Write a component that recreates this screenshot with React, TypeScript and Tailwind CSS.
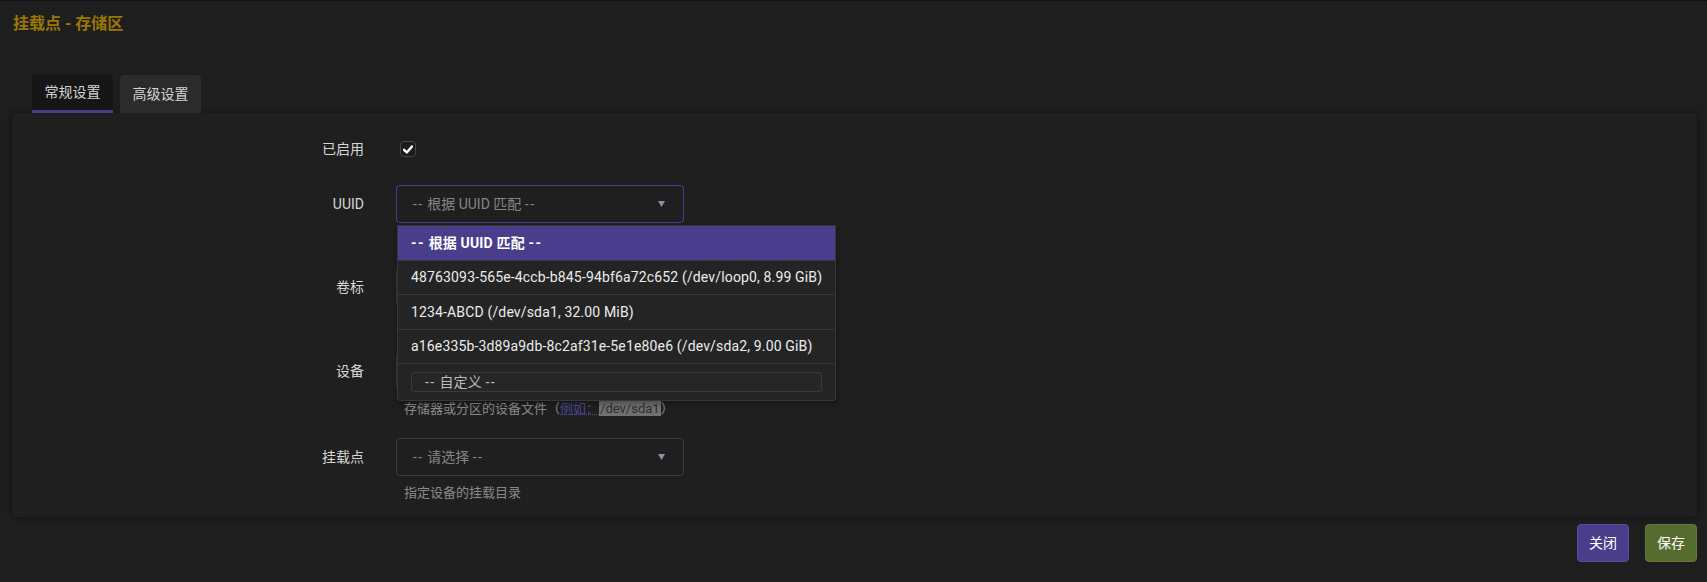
import React from 'react';

// "--" rendered with visible gap between hyphens, as in the original font
const Dashes = () => <span className="tracking-[1.5px]">--</span>;

const withDashes = (inner: string) => (
  <>
    <Dashes /> {inner} <Dashes />
  </>
);

const options = [
  { key: 'uuid', text: withDashes('根据 UUID 匹配'), active: true, h: 'h-[35px]' },
  { key: 'loop0', text: '48763093-565e-4ccb-b845-94bf6a72c652 (/dev/loop0, 8.99 GiB)', active: false, h: 'h-[34px]' },
  { key: 'sda1', text: '1234-ABCD (/dev/sda1, 32.00 MiB)', active: false, h: 'h-[35px]' },
  { key: 'sda2', text: 'a16e335b-3d89a9db-8c2af31e-5e1e80e6 (/dev/sda2, 9.00 GiB)', active: false, h: 'h-[34px]' },
];

const Arrow = () => (
  <svg width="7" height="6" viewBox="0 0 7 6" className="shrink-0">
    <polygon points="0,0 7,0 3.5,6" fill="#8494a8" />
  </svg>
);

const Label = ({ children }: { children: React.ReactNode }) => (
  <div className="w-[352px] shrink-0 h-[38px] flex items-center justify-end text-[14px] text-[#d6d6d6]">
    {children}
  </div>
);

const FakeSelect = ({ text, focused }: { text: React.ReactNode; focused?: boolean }) => (
  <div
    className={`w-[288px] h-[38px] rounded-[4px] border flex items-center justify-between pl-[16px] pr-[18px] text-[14px] text-[#858585] bg-[#1f1f1f] ${
      focused ? 'border-[#4a3d8c]' : 'border-[#3c3c3c]'
    }`}
  >
    <span>{text}</span>
    <Arrow />
  </div>
);

const Help = ({ children, className = '' }: { children: React.ReactNode; className?: string }) => (
  <div className={`pl-[8px] h-[18px] leading-[18px] text-[13px] text-[#8a8a8a] ${className}`}>{children}</div>
);

export default function App() {
  return (
    <div className="w-full h-[582px] bg-[#1e1e1e] overflow-hidden font-['Roboto','Noto_Sans_CJK_SC',sans-serif]">
      <div className="h-px bg-[#121212]" />

      <h3 className="pt-[11px] pl-[13px] leading-6 text-[16px] font-bold text-[#9b7704]">挂载点 - 存储区</h3>

      {/* tabs */}
      <div className="mt-[39px] ml-[32px] flex gap-[7px]">
        <div className="w-[81px] h-[38px] rounded-t-[4px] bg-[#161616] border-b-[3px] border-[#4a3d8c] flex items-center justify-center text-[14px] text-[#d4d4d4]">
          常规设置
        </div>
        <div className="w-[81px] h-[38px] rounded-t-[4px] bg-[#2b2b2b] flex items-center justify-center text-[14px] text-[#d4d4d4]">
          高级设置
        </div>
      </div>

      {/* panel */}
      <div className="ml-[12px] mr-[10px] rounded-[4px] bg-[#1f1f1f] shadow-[0_0_6px_rgba(0,0,0,0.45)] pt-[28px] pb-[15px]">
        <div className="flex items-center h-4">
          <div className="w-[352px] shrink-0 text-right text-[14px] text-[#d6d6d6]">已启用</div>
          <div className="ml-[36px] w-4 h-4 rounded-[4px] border border-[#454545] bg-[#1c1c1c] flex items-center justify-center">
            <svg width="10" height="9" viewBox="0 0 10 9">
              <path d="M1 4.8 L3.8 7.5 L9 1.5" fill="none" stroke="#ffffff" strokeWidth="2.4" strokeLinecap="round" strokeLinejoin="round" />
            </svg>
          </div>
        </div>

        <div className="flex mt-[28px]">
          <Label>UUID</Label>
          <div className="ml-[32px] relative">
            <FakeSelect text={withDashes('根据 UUID 匹配')} focused />
            <div className="absolute left-[1px] top-[40px] z-10 w-[439px] bg-[#242424] border border-[#383838] rounded-b-[3px] shadow-[0_2px_6px_rgba(0,0,0,0.4)] text-[14px] tracking-[0.15px]">
              {options.map((o) => (
                <div
                  key={o.key}
                  className={`${o.h} flex items-center pl-[13px] border-b border-[#383838] whitespace-nowrap ${
                    o.active ? 'bg-[#4a3d8c] font-bold text-white' : 'text-[#ececec]'
                  }`}
                >
                  <span>{o.text}</span>
                </div>
              ))}
              <div className="h-[36px] pl-[13px] pt-[8px]">
                <div className="w-[411px] h-[20px] rounded-[3px] border border-[#3a3a3a] bg-[#262626] pl-[13px] flex items-center text-[14px] text-[#bcbcbc]">
                  <span>{withDashes('自定义')}</span>
                </div>
              </div>
            </div>
          </div>
        </div>

        <div className="flex mt-[45px]">
          <Label>卷标</Label>
          <div className="ml-[32px] w-[288px] h-[38px] rounded-[4px] border border-[#3c3c3c]" />
        </div>

        <div className="flex mt-[46px]">
          <Label>设备</Label>
          <div className="ml-[32px]">
            <div className="w-[288px] h-[38px] rounded-[4px] border border-[#3c3c3c]" />
            <Help className="mt-[10px]">
              存储器或分区的设备文件（
              <span className="text-[#4b4790] underline decoration-dotted">例如：</span>
              <code className="bg-[#707070] text-[#2e2e2e] px-[1px] font-['Roboto','Noto_Sans_CJK_SC',sans-serif]">/dev/sda1</code>）
            </Help>
          </div>
        </div>

        <div className="flex mt-[20px]">
          <Label>挂载点</Label>
          <div className="ml-[32px]">
            <FakeSelect text={withDashes('请选择')} />
            <Help className="mt-[8px]">指定设备的挂载目录</Help>
          </div>
        </div>
      </div>

      {/* buttons */}
      <div className="mt-[7px] mr-[10px] flex justify-end gap-[16px]">
        <button className="w-[52px] h-[38px] rounded-[4px] bg-[#4a3d8c] border border-[#5a4f98] text-[14px] text-white">
          关闭
        </button>
        <button className="w-[52px] h-[38px] rounded-[4px] bg-[#566b2e] border border-[#65793f] text-[14px] text-white">
          保存
        </button>
      </div>
    </div>
  );
}
